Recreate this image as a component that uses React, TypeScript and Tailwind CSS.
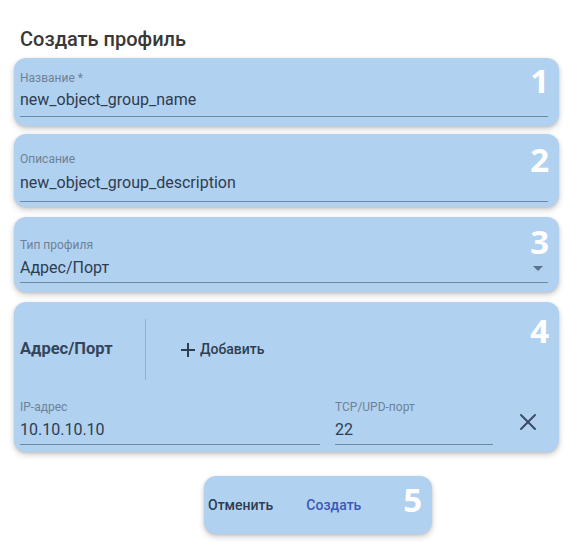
import { X } from "lucide-react";

const card =
  "relative rounded-[12px] bg-[#b1d1f1] shadow-[0_3px_6px_rgba(0,0,0,0.18),0_1px_3px_rgba(0,0,0,0.12)]";
const num =
  "absolute right-[10px] text-[33px] font-bold leading-none text-white [font-family:'Open_Sans',sans-serif]";
const label = "text-[12px] leading-[14px] text-[#6e8296]";
const value = "text-[16px] leading-[24px] text-[#2e3d4f]";

export default function App() {
  return (
    <div className="min-h-[542px] w-[570px] bg-white [font-family:Roboto,'Noto_Sans',sans-serif]">
      <div className="pl-[20px] pt-[25px] text-[20px] font-medium leading-[28px] text-[#383838]">
        Создать профиль
      </div>

      <div className="ml-[14px] mt-[5px] flex w-[545px] flex-col">
        {/* 1 */}
        <div className={`${card} h-[68px] px-[6px] pt-[13px]`}>
          <div className={label}>Название *</div>
          <div className={`${value} mt-[3px] mr-[5px] border-b border-[#6d87a5] pb-[4px]`}>
            new_object_group_name
          </div>
          <span className={`${num} top-[6px]`}>1</span>
        </div>

        {/* 2 */}
        <div className={`${card} mt-[8px] h-[73px] px-[6px] pt-[18px]`}>
          <div className={label}>Описание</div>
          <div className={`${value} mt-[5px] mr-[5px] border-b border-[#6d87a5] pb-[6px]`}>
            new_object_group_description
          </div>
          <span className={`${num} top-[9px]`}>2</span>
        </div>

        {/* 3 */}
        <div className={`${card} mt-[10px] h-[75px] px-[6px] pt-[21px]`}>
          <div className={label}>Тип профиля</div>
          <div
            className={`${value} mt-[4px] mr-[5px] flex items-center justify-between border-b border-[#6d87a5] pb-[2px]`}
          >
            <span>Адрес/Порт</span>
            <svg width="10" height="5" viewBox="0 0 10 5" className="mr-[5px]">
              <path d="M0 0h10L5 5z" fill="#5b7291" />
            </svg>
          </div>
          <span className={`${num} top-[8px]`}>3</span>
        </div>

        {/* 4 */}
        <div className={`${card} mt-[10px] h-[150px] px-[6px] pt-[17px]`}>
          <div className="flex h-[61px] items-center">
            <div className="w-[125px] text-[16.5px] font-bold text-[#34455a]">Адрес/Порт</div>
            <div className="h-full w-px bg-[#93afcc]" />
            <div className="ml-[35px] flex items-center gap-[5px] text-[14px] font-medium text-[#2e3d4f]">
              <svg width="14" height="14" viewBox="0 0 14 14">
                <path d="M7 0v14M0 7h14" stroke="#2e3d4f" strokeWidth="2" />
              </svg>
              <span>Добавить</span>
            </div>
          </div>
          <div className="mt-[20px] flex items-end">
            <div className="w-[300px]">
              <div className={label}>IP-адрес</div>
              <div className={`${value} mt-[4px] border-b border-[#6d87a5] pb-[2px]`}>10.10.10.10</div>
            </div>
            <div className="ml-[15px] w-[158px]">
              <div className={label}>TCP/UPD-порт</div>
              <div className={`${value} mt-[4px] border-b border-[#6d87a5] pb-[2px]`}>22</div>
            </div>
            <X size={28} strokeWidth={1.7} className="mb-[9px] ml-[21px] text-[#3b4d63]" />
          </div>
          <span className={`${num} top-[12px]`}>4</span>
        </div>
      </div>

      {/* 5 */}
      <div className="mt-[24px] flex justify-start pl-[204px]">
        <div className={`${card} flex h-[58px] w-[228px] items-center pl-[4px]`}>
          <span className="text-[14px] font-medium text-[#2e3d4f]">Отменить</span>
          <span className="ml-[33px] text-[14px] font-medium text-[#3b59b8]">Создать</span>
          <span className={`${num} top-[7px]`}>5</span>
        </div>
      </div>
    </div>
  );
}
